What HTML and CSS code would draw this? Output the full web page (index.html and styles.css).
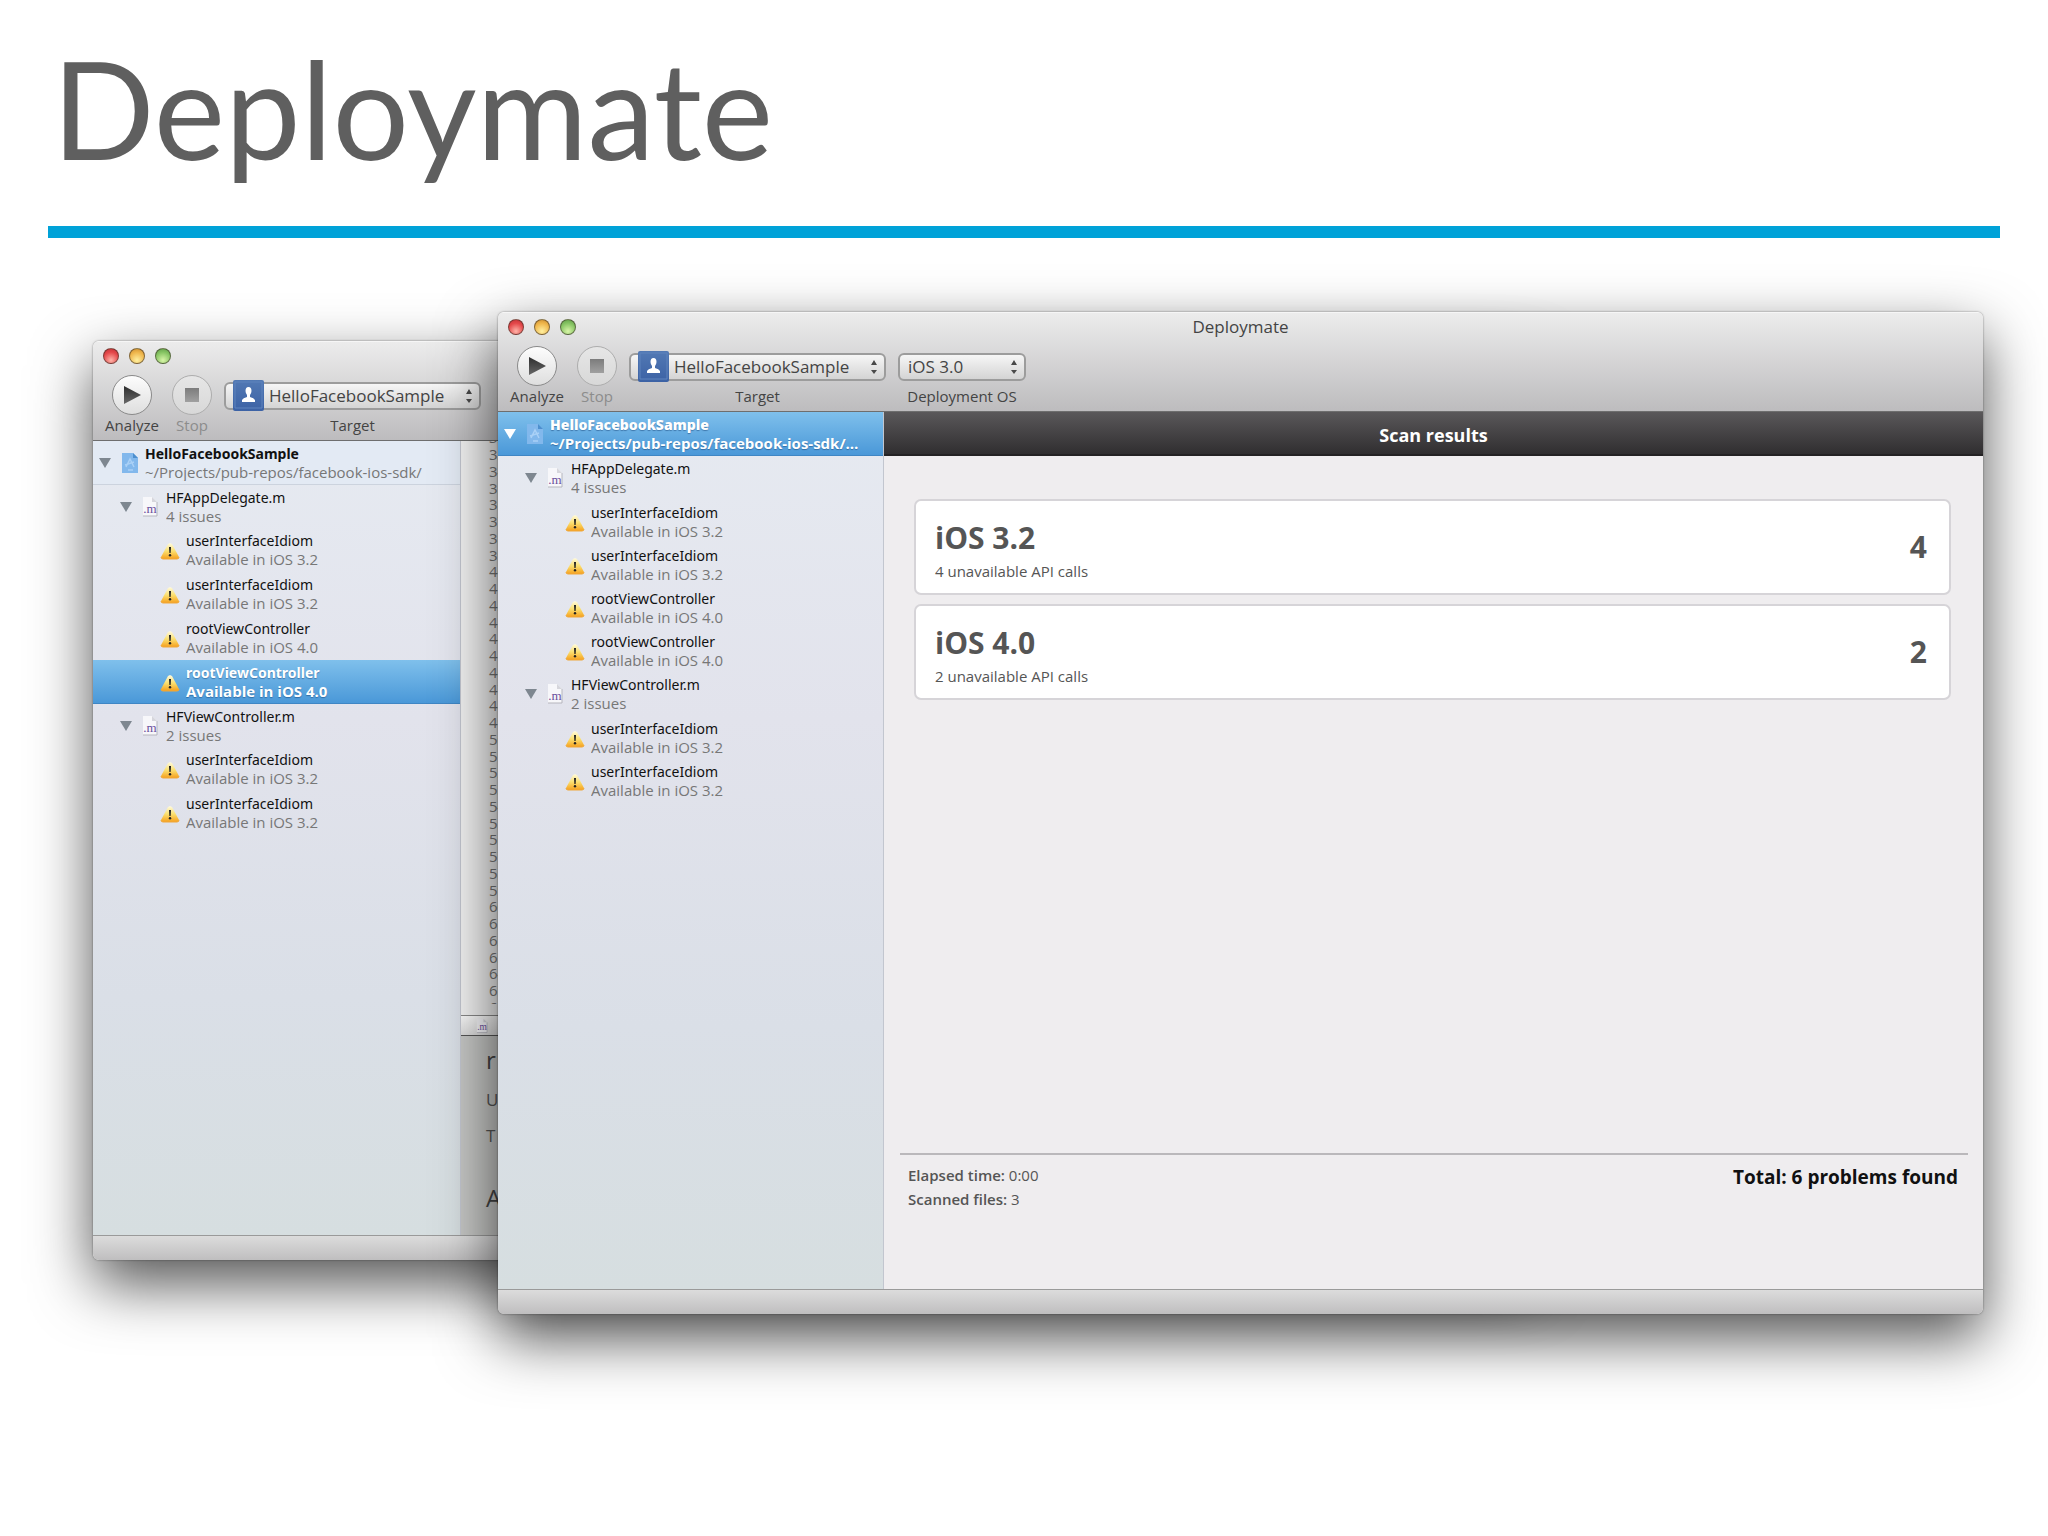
FILE: index.html
```
<!DOCTYPE html>
<html lang="en">

<head>
    <title>Deploymate</title>
    <meta charset="utf-8">
    <link rel="stylesheet" href="styles.css">
</head>

<body>
    <!-- shared icons -->
    <svg class="sprite" aria-hidden="true">
        <defs>
            <linearGradient id="warnFill" x1="0" y1="0" x2="0" y2="1">
                <stop offset="0" stop-color="#fffbe0" />
                <stop offset="0.5" stop-color="#fbe070" />
                <stop offset="1" stop-color="#f5a01e" />
            </linearGradient>
            <linearGradient id="playFill" x1="0" y1="0" x2="0" y2="1">
                <stop offset="0" stop-color="#2e2e2e" />
                <stop offset="1" stop-color="#686868" />
            </linearGradient>
            <linearGradient id="stopFill" x1="0" y1="0" x2="0" y2="1">
                <stop offset="0" stop-color="#7c7c7c" />
                <stop offset="1" stop-color="#a0a0a0" />
            </linearGradient>
            <linearGradient id="appFill" x1="0" y1="0" x2="0" y2="1">
                <stop offset="0" stop-color="#5279b4" />
                <stop offset="1" stop-color="#3c62a5" />
            </linearGradient>
        </defs>
        <symbol id="warn" viewBox="0 0 20 18">
            <path d="M10 1 L12 2 L19 15 Q19 17 17 17 H3 Q1 17 1 15 L8 2 Z" fill="url(#warnFill)" />
            <path d="M1 15 Q1 17 3 17 H17 Q19 17 19 15" fill="none" stroke="#f0a83a" />
            <path d="M9 5 H11 L10.600 11 H9.400 Z" fill="#222" />
            <circle cx="10" cy="13.200" r="1.200" fill="#222" />
        </symbol>
        <symbol id="project" viewBox="0 0 18 22">
            <path d="M1 1 H12 L17 6 V21 H1 Z" fill="#82b8ec" />
            <path d="M12 1 L17 6 H12 Z" fill="#4d8fce" />
            <path d="M5 15 L9 7 L13 15 M4 13 L13 10 M7 18 H12" fill="none" stroke="#a9d0f6" stroke-width="1.500" />
        </symbol>
        <symbol id="mfile" viewBox="0 0 16 22">
            <path d="M1 1 H10 L15 6 V20 H1 Z" fill="#f7f7fa" />
            <path d="M10 1 L15 6 H10 Z" fill="#d6d6dc" />
            <path d="M1 20 H15 V6" fill="none" stroke="#b5b5bd" />
            <text x="8" y="17" text-anchor="middle" class="mfile-text">.m</text>
        </symbol>
        <symbol id="play" viewBox="0 0 18 18">
            <path d="M1 0 L18 9 L1 18 Z" fill="url(#playFill)" />
        </symbol>
        <symbol id="stop" viewBox="0 0 18 18">
            <path d="M2 2 H16 V16 H2 Z" fill="url(#stopFill)" />
        </symbol>
        <symbol id="app" viewBox="0 0 31 31">
            <rect width="31" height="31" rx="2" fill="url(#appFill)" />
            <path d="M2 4 V2 H29 V28 H2 V4" fill="none" stroke="#5f84bd" />
            <path d="M9 22 V20 Q10 18 14 17 V15 Q12.500 13 12.500 11 Q12.500 7 15.500 7 Q18.500 7 18.500 11 Q18.500 13 17 15 V17 Q21 18 22 20 V22 Z" fill="#fff" />
        </symbol>
        <symbol id="arrows" viewBox="0 0 8 16">
            <path d="M4 1 L7 6 H1 Z M4 15 L1 11 H7 Z" fill="#4a4a4a" />
        </symbol>
    </svg>

    <header class="slide-title">
        <h1>Deploymate</h1>
    </header>

    <main class="stage">
        <section class="window window-back">
            <header class="toolbar">
                <div class="titlebar">
                    <div class="lights"><i class="red"></i><i class="yellow"></i><i class="green"></i></div>
                </div>
                <div class="tools">
                    <div class="tool">
                        <button class="round" id="analyze1" aria-label="Analyze"><svg><use href="#play" /></svg></button>
                        <label for="analyze1">Analyze</label>
                    </div>
                    <div class="tool">
                        <button class="round" id="stop1" aria-label="Stop" disabled><svg><use href="#stop" /></svg></button>
                        <label for="stop1">Stop</label>
                    </div>
                    <div class="tool tool-target">
                        <div class="popup">
                            <select id="target1"><option>HelloFacebookSample</option></select>
                            <svg class="app-icon"><use href="#app" /></svg>
                            <svg class="arrows"><use href="#arrows" /></svg>
                        </div>
                        <label for="target1">Target</label>
                    </div>
                </div>
            </header>
            <div class="panes">
                <ul class="sidebar">
                    <li class="row project">
                        <span class="disclosure"></span><svg class="icon"><use href="#project" /></svg>
                        <p><b>HelloFacebookSample</b><small>~/Projects/pub-repos/facebook-ios-sdk/</small></p>
                    </li>
                    <li class="row file">
                        <span class="disclosure"></span><svg class="icon"><use href="#mfile" /></svg>
                        <p><span>HFAppDelegate.m</span><small>4 issues</small></p>
                    </li>
                    <li class="row issue">
                        <svg class="icon"><use href="#warn" /></svg>
                        <p><span>userInterfaceIdiom</span><small>Available in iOS 3.2</small></p>
                    </li>
                    <li class="row issue">
                        <svg class="icon"><use href="#warn" /></svg>
                        <p><span>userInterfaceIdiom</span><small>Available in iOS 3.2</small></p>
                    </li>
                    <li class="row issue">
                        <svg class="icon"><use href="#warn" /></svg>
                        <p><span>rootViewController</span><small>Available in iOS 4.0</small></p>
                    </li>
                    <li class="row issue selected">
                        <svg class="icon"><use href="#warn" /></svg>
                        <p><span>rootViewController</span><small>Available in iOS 4.0</small></p>
                    </li>
                    <li class="row file">
                        <span class="disclosure"></span><svg class="icon"><use href="#mfile" /></svg>
                        <p><span>HFViewController.m</span><small>2 issues</small></p>
                    </li>
                    <li class="row issue">
                        <svg class="icon"><use href="#warn" /></svg>
                        <p><span>userInterfaceIdiom</span><small>Available in iOS 3.2</small></p>
                    </li>
                    <li class="row issue">
                        <svg class="icon"><use href="#warn" /></svg>
                        <p><span>userInterfaceIdiom</span><small>Available in iOS 3.2</small></p>
                    </li>
                </ul>
                <div class="editor">
                    <ol class="lines" id="lines"></ol>
                    <div class="pathbar"><svg class="icon"><use href="#mfile" /></svg></div>
                    <div class="docs">
                        <h2>r</h2>
                        <p>U</p>
                        <p>T</p>
                        <h3>A</h3>
                    </div>
                </div>
            </div>
            <footer class="statusbar"></footer>
        </section>

        <section class="window window-front">
            <header class="toolbar">
                <div class="titlebar">
                    <div class="lights"><i class="red"></i><i class="yellow"></i><i class="green"></i></div>
                    <span class="caption">Deploymate</span>
                </div>
                <div class="tools">
                    <div class="tool">
                        <button class="round" id="analyze2" aria-label="Analyze"><svg><use href="#play" /></svg></button>
                        <label for="analyze2">Analyze</label>
                    </div>
                    <div class="tool">
                        <button class="round" id="stop2" aria-label="Stop" disabled><svg><use href="#stop" /></svg></button>
                        <label for="stop2">Stop</label>
                    </div>
                    <div class="tool tool-target">
                        <div class="popup">
                            <select id="target2"><option>HelloFacebookSample</option></select>
                            <svg class="app-icon"><use href="#app" /></svg>
                            <svg class="arrows"><use href="#arrows" /></svg>
                        </div>
                        <label for="target2">Target</label>
                    </div>
                    <div class="tool tool-os">
                        <div class="popup">
                            <select id="os"><option>iOS 3.0</option></select>
                            <svg class="arrows"><use href="#arrows" /></svg>
                        </div>
                        <label for="os">Deployment OS</label>
                    </div>
                </div>
            </header>
            <div class="panes">
                <ul class="sidebar">
                    <li class="row project selected">
                        <span class="disclosure"></span><svg class="icon"><use href="#project" /></svg>
                        <p><b>HelloFacebookSample</b><small>~/Projects/pub-repos/facebook-ios-sdk/…</small></p>
                    </li>
                    <li class="row file">
                        <span class="disclosure"></span><svg class="icon"><use href="#mfile" /></svg>
                        <p><span>HFAppDelegate.m</span><small>4 issues</small></p>
                    </li>
                    <li class="row issue">
                        <svg class="icon"><use href="#warn" /></svg>
                        <p><span>userInterfaceIdiom</span><small>Available in iOS 3.2</small></p>
                    </li>
                    <li class="row issue">
                        <svg class="icon"><use href="#warn" /></svg>
                        <p><span>userInterfaceIdiom</span><small>Available in iOS 3.2</small></p>
                    </li>
                    <li class="row issue">
                        <svg class="icon"><use href="#warn" /></svg>
                        <p><span>rootViewController</span><small>Available in iOS 4.0</small></p>
                    </li>
                    <li class="row issue">
                        <svg class="icon"><use href="#warn" /></svg>
                        <p><span>rootViewController</span><small>Available in iOS 4.0</small></p>
                    </li>
                    <li class="row file">
                        <span class="disclosure"></span><svg class="icon"><use href="#mfile" /></svg>
                        <p><span>HFViewController.m</span><small>2 issues</small></p>
                    </li>
                    <li class="row issue">
                        <svg class="icon"><use href="#warn" /></svg>
                        <p><span>userInterfaceIdiom</span><small>Available in iOS 3.2</small></p>
                    </li>
                    <li class="row issue">
                        <svg class="icon"><use href="#warn" /></svg>
                        <p><span>userInterfaceIdiom</span><small>Available in iOS 3.2</small></p>
                    </li>
                </ul>
                <div class="results">
                    <h2 class="results-title">Scan results</h2>
                    <div class="cards">
                        <article class="card">
                            <div>
                                <h3>iOS 3.2</h3>
                                <p>4 unavailable API calls</p>
                            </div>
                            <strong>4</strong>
                        </article>
                        <article class="card">
                            <div>
                                <h3>iOS 4.0</h3>
                                <p>2 unavailable API calls</p>
                            </div>
                            <strong>2</strong>
                        </article>
                    </div>
                    <div class="summary">
                        <div>
                            <p><b>Elapsed time:</b> 0:00</p>
                            <p><b>Scanned files:</b> 3</p>
                        </div>
                        <strong>Total: 6 problems found</strong>
                    </div>
                </div>
            </div>
            <footer class="statusbar"></footer>
        </section>
    </main>

    <script>
        // line numbers of the source editor
        let html = ""
        for (let i = 32; i <= 66; i++) {
            html += `<li>${i}</li>`
        }
        document.getElementById('lines').innerHTML = html
    </script>
</body>

</html>
```
FILE: styles.css
```
* {
    box-sizing: border-box;
    margin: 0;
    padding: 0;
}

body {
    display: flex;
    flex-direction: column;
    min-height: 100vh;
    padding-bottom: 222px;
    background-color: #fff;
    color: #111;
    font-family: "Open Sans", "Noto Sans", sans-serif;
    font-size: 15px;
    line-height: 18px;
}

ul,
ol {
    list-style: none;
}

.sprite {
    position: absolute;
    width: 0;
    height: 0;
}

/* Slide title */
.slide-title {
    margin: 0 48px;
    padding: 30px 0 40px 4px;
    border-bottom: 12px solid #00a2d8;
}

.slide-title h1 {
    color: #5f5f5f;
    font-family: Lato, sans-serif;
    font-size: 135px;
    font-weight: 400;
    line-height: 156px;
}

/* Both windows share one cell, the front one lies over the other */
.stage {
    flex: 1;
    display: grid;
    padding: 74px 65px 0 93px;
}

.window {
    grid-area: 1 / 1;
    display: flex;
    flex-direction: column;
    overflow: hidden;
    border-radius: 6px;
    box-shadow: 0 0 2px rgba(0, 0, 0, 0.5), 0 24px 60px rgba(0, 0, 0, 0.68);
}

.window-back {
    width: 76%;
    margin: 29px 0 54px;
}

.window-front {
    z-index: 1;
    margin-left: 405px;
}

.toolbar {
    height: 100px;
    background: linear-gradient(#ececec, #bdbcbe);
    border-top: 1px solid #f6f6f6;
    border-bottom: 1px solid #6e6e6e;
}

.titlebar {
    position: relative;
    display: flex;
    align-items: center;
    justify-content: center;
    height: 28px;
}

.caption {
    color: #444;
    font-size: 17px;
    line-height: 24px;
}

.lights {
    position: absolute;
    left: 10px;
    display: flex;
    gap: 10px;
}

.lights i {
    width: 16px;
    height: 16px;
    border-radius: 50%;
    border: 1px solid rgba(60, 50, 40, 0.6);
}

.lights .red {
    background: radial-gradient(circle at 50% 80%, #ffb3a8, #e4484a 60%, #c03034);
}

.lights .yellow {
    background: radial-gradient(circle at 50% 80%, #fff0a0, #efb64c 60%, #c98a2c);
}

.lights .green {
    background: radial-gradient(circle at 50% 80%, #d8f5a8, #86c463 60%, #5c9a44);
}

.tools {
    display: flex;
    gap: 4px;
    padding: 5px 11px 0;
}

.tool {
    display: flex;
    flex-direction: column;
    align-items: center;
    width: 56px;
    color: #444;
}

.tool-target {
    width: 257px;
}

.tool-os {
    width: 128px;
    margin-left: 8px;
}

.round {
    display: flex;
    align-items: center;
    justify-content: center;
    width: 40px;
    height: 40px;
    margin-bottom: 1px;
    border: 1px solid #8a8a8a;
    border-radius: 50%;
    background: linear-gradient(#fdfdfd, #dedede);
}

.round svg {
    width: 18px;
    height: 18px;
}

.round:disabled {
    border-color: #adadad;
    background: linear-gradient(#e6e6e6, #d8d8d8);
}

.round:disabled + label {
    color: #8c8c8c;
}

.popup {
    position: relative;
    display: flex;
    align-items: center;
    width: 100%;
    height: 41px;
}

.popup select {
    appearance: none;
    width: 100%;
    height: 28px;
    padding: 0 8px;
    border: 2px solid #9c9c9c;
    border-radius: 6px;
    background: linear-gradient(#f6f6f6, #d4d4d4);
    color: #444;
    font: 17px "Open Sans", "Noto Sans", sans-serif;
}

.tool-target select {
    padding-left: 43px;
}

.app-icon {
    position: absolute;
    left: 9px;
    width: 31px;
    height: 31px;
    pointer-events: none;
}

.arrows {
    position: absolute;
    right: 8px;
    width: 8px;
    height: 16px;
    pointer-events: none;
}

.panes {
    flex: 1;
    display: flex;
    min-height: 0;
}

/* Source list */
.sidebar {
    width: 386px;
    background: linear-gradient(#e6eaf1, #e2e3ec 35%, #dadfe7 70%, #d6dee0);
    border-right: 1px solid #c2c6cf;
}

.window-back .sidebar {
    width: 368px;
}

.row {
    display: flex;
    align-items: center;
    height: 44px;
    padding-right: 10px;
}

.window-front .issue,
.window-back .file {
    height: 43px;
}

.row p {
    flex: 1;
    display: flex;
    flex-direction: column;
    min-width: 0;
    font-family: "Noto Sans", sans-serif;
    font-size: 14px;
    white-space: nowrap;
}

.row small {
    overflow: hidden;
    color: #777;
    font-family: "Open Sans", sans-serif;
    font-size: 15px;
    text-overflow: ellipsis;
}

.project {
    padding-left: 6px;
    background-color: #e3eaf4;
    border-bottom: 1px solid #ccd3de;
}

.file {
    padding-left: 27px;
}

.issue {
    padding-left: 67px;
}

.disclosure {
    margin-right: 10px;
    border: 6px solid transparent;
    border-top: 10px solid #7e8790;
    border-bottom: 0;
}

.row .icon {
    width: 18px;
    height: 22px;
    margin-right: 6px;
}

.file .icon {
    width: 16px;
    margin-right: 8px;
}

.issue .icon {
    width: 20px;
    height: 18px;
    margin-top: 2px;
}

.mfile-text {
    fill: #6a4f9c;
    font-family: "Liberation Serif", serif;
    font-size: 13px;
}

.selected {
    background: linear-gradient(#7fc0ec, #4a98d8);
    border-bottom: 1px solid #3f86c4;
    font-weight: 700;
    text-shadow: 0 1px 1px rgba(0, 40, 90, 0.4);
}

.selected,
.selected small {
    color: #fff;
}

.selected .disclosure {
    border-top-color: #fff;
}

/* Source editor */
.editor {
    flex: 1;
    display: flex;
    flex-direction: column;
    background-color: #f2f2f2;
}

.lines {
    height: 563px;
    overflow: hidden;
    padding-left: 28px;
    color: #777;
}

.lines li {
    line-height: 17px;
}

.lines li:nth-child(4n) {
    line-height: 16px;
}

.lines li:first-child {
    margin-top: -12px;
}

.pathbar {
    display: flex;
    align-items: center;
    height: 21px;
    margin-top: 11px;
    padding-left: 14px;
    background: linear-gradient(#fafafa, #dcdcdc);
    border-top: 1px solid #888;
    border-bottom: 1px solid #555;
}

.pathbar .icon {
    width: 14px;
    height: 16px;
}

.docs {
    flex: 1;
    padding: 8px 25px;
    background-color: #c6c7c5;
    color: #555;
}

.docs h2,
.docs h3 {
    color: #444;
    font-size: 24px;
    font-weight: 400;
    line-height: 32px;
}

.docs p {
    padding-top: 12px;
    font-size: 17px;
    line-height: 24px;
}

.docs h3 {
    padding-top: 34px;
}

/* Scan results */
.results {
    flex: 1;
    display: flex;
    flex-direction: column;
    background-color: #efedef;
}

.results-title {
    height: 44px;
    background: linear-gradient(#5a585a, #302e30);
    border-bottom: 2px solid #242224;
    color: #fff;
    font-size: 18px;
    line-height: 46px;
    text-align: center;
}

.cards {
    flex: 1;
    display: flex;
    flex-direction: column;
    gap: 9px;
    padding: 43px 32px 0 30px;
}

.card {
    display: flex;
    align-items: center;
    justify-content: space-between;
    height: 96px;
    padding: 0 22px 0 19px;
    border: 2px solid #d6d4d8;
    border-radius: 7px;
    background-color: #fff;
    color: #555;
}

.card h3,
.card strong {
    font-size: 30px;
    font-weight: 700;
    line-height: 40px;
}

.card p {
    padding-top: 4px;
}

.card div {
    padding-top: 3px;
}

.summary {
    display: flex;
    justify-content: space-between;
    height: 136px;
    margin: 0 15px 0 16px;
    padding: 8px 10px 0 8px;
    border-top: 2px solid #bab8bb;
}

.summary p {
    color: #555;
    line-height: 24px;
}

.summary b {
    font-weight: 600;
}

.summary strong {
    font-size: 19px;
    line-height: 28px;
}

.statusbar {
    height: 25px;
    background: linear-gradient(#dcdcdc, #bfbebf);
    border-top: 1px solid #9a9a9a;
}
```
